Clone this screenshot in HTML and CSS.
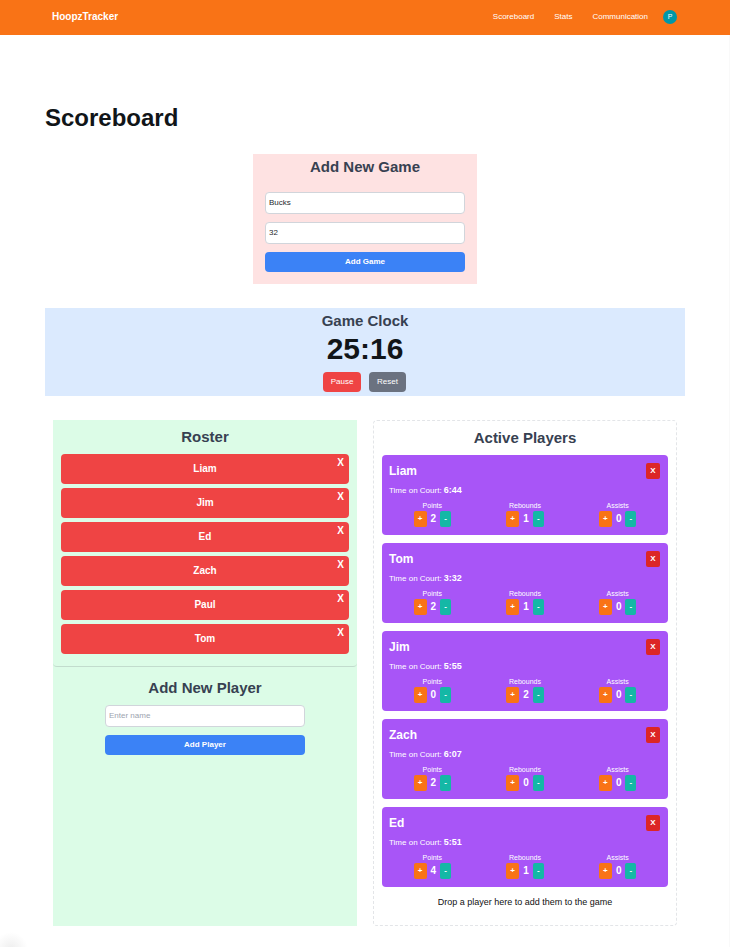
FILE: index.html
```html
<!DOCTYPE html>
<html lang="en">
<head>
<meta charset="utf-8">
<title>HoopzTracker</title>
<link rel="stylesheet" href="styles.css">
</head>
<body>
<header class="navbar">
  <span class="brand">HoopzTracker</span>
  <nav class="links"><a>Scoreboard</a><a>Stats</a><a>Communication</a><span class="avatar">P</span></nav>
</header>
<main class="page">
  <h1>Scoreboard</h1>
  <section class="add-game">
    <h2>Add New Game</h2>
    <input class="field" type="text" value="Bucks">
    <input class="field" type="text" value="32">
    <button class="primary">Add Game</button>
  </section>
  <section class="clock">
    <h2>Game Clock</h2>
    <div class="time">25:16</div>
    <div class="controls"><button class="pause">Pause</button><button class="reset">Reset</button></div>
  </section>
  <div class="columns">
    <section class="roster">
      <div class="roster-list">
        <h2>Roster</h2>
        <ul id="roster"></ul>
      </div>
      <div class="add-player">
        <h2>Add New Player</h2>
        <input class="field" type="text" placeholder="Enter name">
        <button class="primary">Add Player</button>
      </div>
    </section>
    <section class="active">
      <h2>Active Players</h2>
      <div class="cards" id="cards"></div>
      <p class="drop">Drop a player here to add them to the game</p>
    </section>
  </div>
</main>
<div class="corner-glow"></div>
<script src="app.js"></script>
</body>
</html>
```
FILE: styles.css
```css
* { box-sizing: border-box; }
body { margin: 0; height: 947px; overflow: hidden; background: linear-gradient(#f9f9f9, #f9f9f9) right top / 1px 100% no-repeat #fff; color: #111518; font-family: "Liberation Sans", Arial, sans-serif; font-size: 8px; }
h1, h2, h3, p, ul { margin: 0; padding: 0; }
button { border: 0; padding: 0; font: inherit; color: #fff; }
.navbar { height: 35px; padding: 0 53px 2px 52px; display: flex; align-items: center; justify-content: space-between; background: #f97316; color: #fff; }
.brand { font-size: 10px; font-weight: 700; line-height: 12px; }
.links { display: flex; align-items: center; gap: 20px; }
.links a { line-height: 10px; }
.avatar { width: 14px; height: 14px; margin-left: -5px; border-radius: 50%; background: #0097a7; font-size: 7px; line-height: 14px; text-align: center; }
.page { width: 640px; margin: 0 0 0 45px; padding-top: 67px; }
h1 { font-size: 24px; line-height: 32px; }
h2 { font-size: 15px; line-height: 20px; color: #374151; text-align: center; }
.add-game { width: 224px; height: 130px; margin: 20px auto 24px; padding: 3px 12px 12px; background: #fee2e2; display: flex; flex-direction: column; }
.add-game h2 { margin-bottom: 15px; }
.field { display: block; width: 200px; height: 22px; margin: 0 0 8px; padding: 0 3px 1px; border: 1px solid #d1d5db; border-radius: 4px; background: #fff; font: 8px "Liberation Sans", Arial, sans-serif; color: #25292e; outline: 0; }
.field::placeholder { color: #9ca3af; }
.primary { display: block; width: 200px; height: 20px; padding-bottom: 1px; border-radius: 4px; background: #3b82f6; font-weight: 700; }
.clock { height: 88px; padding-top: 3px; background: #dbeafe; text-align: center; }
.time { font-size: 30px; font-weight: 700; line-height: 36px; }
.controls { display: flex; justify-content: center; gap: 8px; margin: 5px 1px 0 0; }
.controls button { height: 20px; padding-bottom: 1px; border-radius: 4px; }
.controls .pause { width: 38px; background: #ef4444; }
.controls .reset { width: 37px; background: #6b7280; }
.columns { display: grid; grid-template-columns: 1fr 1fr; gap: 16px; margin: 24px 8px 0; height: 506px; }
.roster { background: #dcfce7; }
.roster-list { height: 247px; padding: 7px 8px 0; border-bottom: 1px solid #c2dccd; border-radius: 4px; }
.roster ul { list-style: none; margin-top: 7px; display: grid; gap: 4px; }
.roster li { position: relative; height: 30px; border-radius: 4px; background: #ef4444; color: #fff; font-size: 10px; font-weight: 700; line-height: 29px; text-align: center; }
.roster li button { position: absolute; top: 3px; right: 5px; font-size: 10px; line-height: 12px; background: none; }
.add-player { width: 200px; margin: 11px auto 0; }
.add-player h2 { margin-bottom: 7px; }
.active { padding: 7px 8px; border: 1px dashed #e3e5e8; border-radius: 4px; }
.cards { display: grid; gap: 8px; margin-top: 7px; }
.card { height: 80px; padding: 8px; border-radius: 4px; background: #a855f7; color: #fff; }
.card-head { display: flex; justify-content: space-between; height: 16px; }
.card h3 { margin-left: -1px; font-size: 12px; line-height: 16px; }
.remove { width: 14px; height: 16px; padding-bottom: 1px; border-radius: 2px; background: #dc2626; font-weight: 700; }
.court { margin: 5px 0 0 -1px; line-height: 12px; }
.court b { font-size: 9px; }
.stats { display: grid; grid-template-columns: repeat(3, 1fr); gap: 8px; margin-top: 4px; text-align: center; }
.label { font-size: 7px; line-height: 10px; }
.counter { display: flex; align-items: center; justify-content: center; gap: 4px; font-size: 10px; font-weight: 700; line-height: 16px; }
.counter button { height: 16px; padding-bottom: 2px; border-radius: 2px; font-size: 8px; font-weight: 700; }
.plus { width: 13px; background: #f97316; }
.minus { width: 11px; background: #14b8a6; }
.drop { margin-top: 9px; font-size: 9px; line-height: 12px; text-align: center; color: #111; }
.corner-glow { position: absolute; left: -6px; top: 932px; width: 34px; height: 34px; border-radius: 50%; background: radial-gradient(circle, #eee, transparent 70%); }
```
FILE: app.js
```js
document.getElementById('roster').innerHTML = ['Liam', 'Jim', 'Ed', 'Zach', 'Paul', 'Tom']
  .map(name => `<li>${name}<button>X</button></li>`).join('');

const active = [
  ['Liam', '6:44', 2, 1, 0],
  ['Tom', '3:32', 2, 1, 0],
  ['Jim', '5:55', 0, 2, 0],
  ['Zach', '6:07', 2, 0, 0],
  ['Ed', '5:51', 4, 1, 0]
];
const stat = (label, value) => `<div><div class="label">${label}</div>
  <div class="counter"><button class="plus">+</button><span>${value}</span><button class="minus">-</button></div></div>`;
document.getElementById('cards').innerHTML = active.map(([name, time, points, rebounds, assists]) => `
  <article class="card">
    <div class="card-head"><h3>${name}</h3><button class="remove">X</button></div>
    <p class="court">Time on Court: <b>${time}</b></p>
    <div class="stats">${stat('Points', points)}${stat('Rebounds', rebounds)}${stat('Assists', assists)}</div>
  </article>`).join('');
```
